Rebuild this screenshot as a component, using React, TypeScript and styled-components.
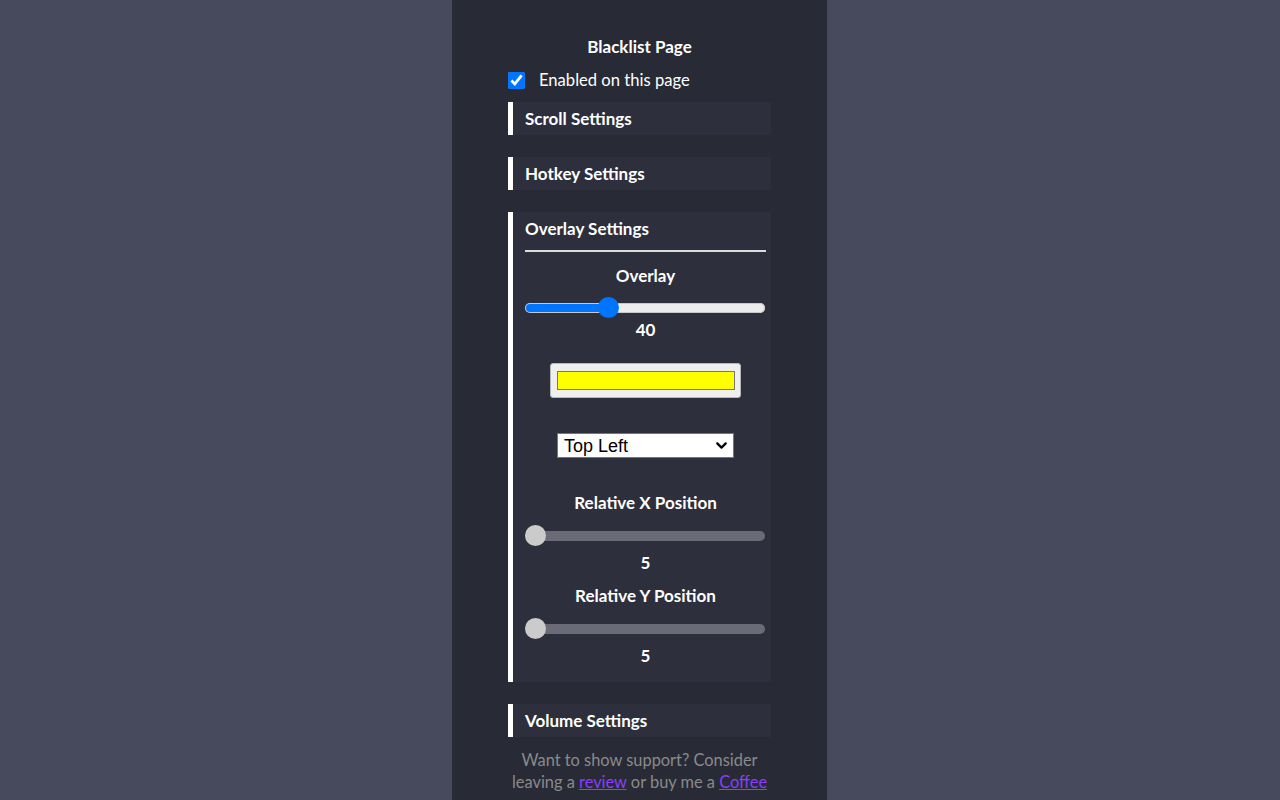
import React, { useState } from "react";
import styled, { createGlobalStyle } from "styled-components";
import { ChevronDown } from "lucide-react";

const GlobalStyle = createGlobalStyle`
  body {
    margin: 0;
    background: #474a5c;
    font-family: Lato, "Open Sans", sans-serif;
    color: #ffffff;
  }
`;

const Page = styled.div`
  display: flex;
  justify-content: center;
  min-height: 100vh;
  padding-right: 1px;
`;

const Panel = styled.div`
  width: 375px;
  box-sizing: border-box;
  background: #282a36;
  padding: 36px 56px 0;
  display: flex;
  flex-direction: column;
`;

const Title = styled.div`
  text-align: center;
  font-weight: 700;
  font-size: 17px;
  line-height: 21px;
`;

const CheckRow = styled.label`
  display: flex;
  align-items: center;
  gap: 14px;
  margin-top: 13px;
  font-size: 16.6px;
  line-height: 20px;

  input {
    width: 17px;
    height: 17px;
    margin: 0;
    accent-color: #0075ff;
  }
`;

const Section = styled.div<{ $first?: boolean }>`
  margin-top: ${(p) => (p.$first ? "12px" : "22px")};
  border-left: 5px solid #ffffff;
  background: #2d2f3d;
  padding: 0 5px 0 12px;
`;

const SectionHeader = styled.div`
  height: 33px;
  line-height: 33px;
  font-weight: 700;
  font-size: 17px;
  cursor: pointer;
`;

const Divider = styled.div`
  margin-top: 5px;
  height: 2px;
  background: #dcdcdc;
`;

const Body = styled.div`
  display: flex;
  flex-direction: column;
  align-items: center;
  padding-bottom: 16px;
`;

const Label = styled.div<{ $gap: number }>`
  margin-top: ${(p) => p.$gap}px;
  font-weight: 700;
  font-size: 17px;
  line-height: 20px;
  text-align: center;
`;

const Range = styled.input<{ $gap: number; $fill: number; $off?: boolean }>`
  -webkit-appearance: none;
  appearance: none;
  width: 240px;
  height: 21px;
  margin: ${(p) => p.$gap}px 0 0;
  background: transparent;
  align-self: flex-start;

  &::-webkit-slider-runnable-track {
    height: 10px;
    border-radius: 5px;
    background: ${(p) =>
      p.$off
        ? "#6b6b77"
        : `linear-gradient(to right, #0075ff ${p.$fill}%, #ececec ${p.$fill}%)`};
    box-shadow: ${(p) => (p.$off ? "none" : "inset 0 0 0 1px #c8c8c8")};
  }

  &::-webkit-slider-thumb {
    -webkit-appearance: none;
    appearance: none;
    width: 21px;
    height: 21px;
    border-radius: 50%;
    margin-top: -5.5px;
    background: ${(p) => (p.$off ? "#cbcbcb" : "#0075ff")};
    border: none;
  }
`;

const ColorBox = styled.div`
  margin-top: 23px;
  width: 191px;
  height: 35px;
  box-sizing: border-box;
  background: #efefef;
  border: 1px solid #b8b8b8;
  border-radius: 3px;
  display: flex;
  align-items: center;
  justify-content: center;
`;

const Swatch = styled.div<{ $color: string }>`
  width: 178px;
  height: 19px;
  box-sizing: border-box;
  border: 1px solid #777777;
  background: ${(p) => p.$color};
`;

const SelectWrap = styled.div`
  position: relative;
  margin-top: 35px;
  width: 177px;
  height: 25px;

  svg {
    position: absolute;
    right: 4px;
    top: 4px;
    pointer-events: none;
    color: #000000;
  }
`;

const Select = styled.select`
  -webkit-appearance: none;
  appearance: none;
  width: 100%;
  height: 100%;
  box-sizing: border-box;
  border: 1px solid #767676;
  border-radius: 0;
  background: #ffffff;
  color: #000000;
  font-family: "Liberation Sans", Arial, sans-serif;
  font-size: 18px;
  padding: 0 0 0 6px;
`;

const Footer = styled.div`
  margin-top: 12px;
  text-align: center;
  color: #8a8a8a;
  font-size: 16.4px;
  line-height: 22px;

  a {
    color: #8a3ffc;
  }
`;

const pct = (v: number, min: number, max: number) => ((v - min) / (max - min)) * 100;

const CollapsedSection = ({ title, first }: { title: string; first?: boolean }) => (
  <Section $first={first}>
    <SectionHeader>{title}</SectionHeader>
  </Section>
);

export default function App() {
  const [overlay, setOverlay] = useState(40);
  const [enabled, setEnabled] = useState(true);

  return (
    <Page>
      <GlobalStyle />
      <Panel>
        <Title>Blacklist Page</Title>
        <CheckRow>
          <input type="checkbox" checked={enabled} onChange={(e) => setEnabled(e.target.checked)} />
          Enabled on this page
        </CheckRow>

        <CollapsedSection title="Scroll Settings" first />
        <CollapsedSection title="Hotkey Settings" />

        <Section>
          <SectionHeader>Overlay Settings</SectionHeader>
          <Divider />
          <Body>
            <Label $gap={14}>Overlay</Label>
            <Range
              type="range"
              min={10}
              max={100}
              value={overlay}
              onChange={(e) => setOverlay(Number(e.target.value))}
              $gap={11}
              $fill={pct(overlay, 10, 100)}
            />
            <Label $gap={2}>{overlay}</Label>
            <ColorBox>
              <Swatch $color="#ffff00" />
            </ColorBox>
            <SelectWrap>
              <Select defaultValue="tl">
                <option value="tl">Top Left</option>
                <option value="tr">Top Right</option>
                <option value="bl">Bottom Left</option>
                <option value="br">Bottom Right</option>
              </Select>
              <ChevronDown size={17} strokeWidth={3.2} />
            </SelectWrap>
            <Label $gap={35}>Relative X Position</Label>
            <Range type="range" min={5} max={95} value={5} readOnly disabled $gap={12} $fill={0} $off />
            <Label $gap={7}>5</Label>
            <Label $gap={13}>Relative Y Position</Label>
            <Range type="range" min={5} max={95} value={5} readOnly disabled $gap={12} $fill={0} $off />
            <Label $gap={7}>5</Label>
          </Body>
        </Section>

        <CollapsedSection title="Volume Settings" />

        <Footer>
          Want to show support? Consider
          <br />
          leaving a <a href="#review">review</a> or buy me a <a href="#coffee">Coffee</a>
        </Footer>
      </Panel>
    </Page>
  );
}
